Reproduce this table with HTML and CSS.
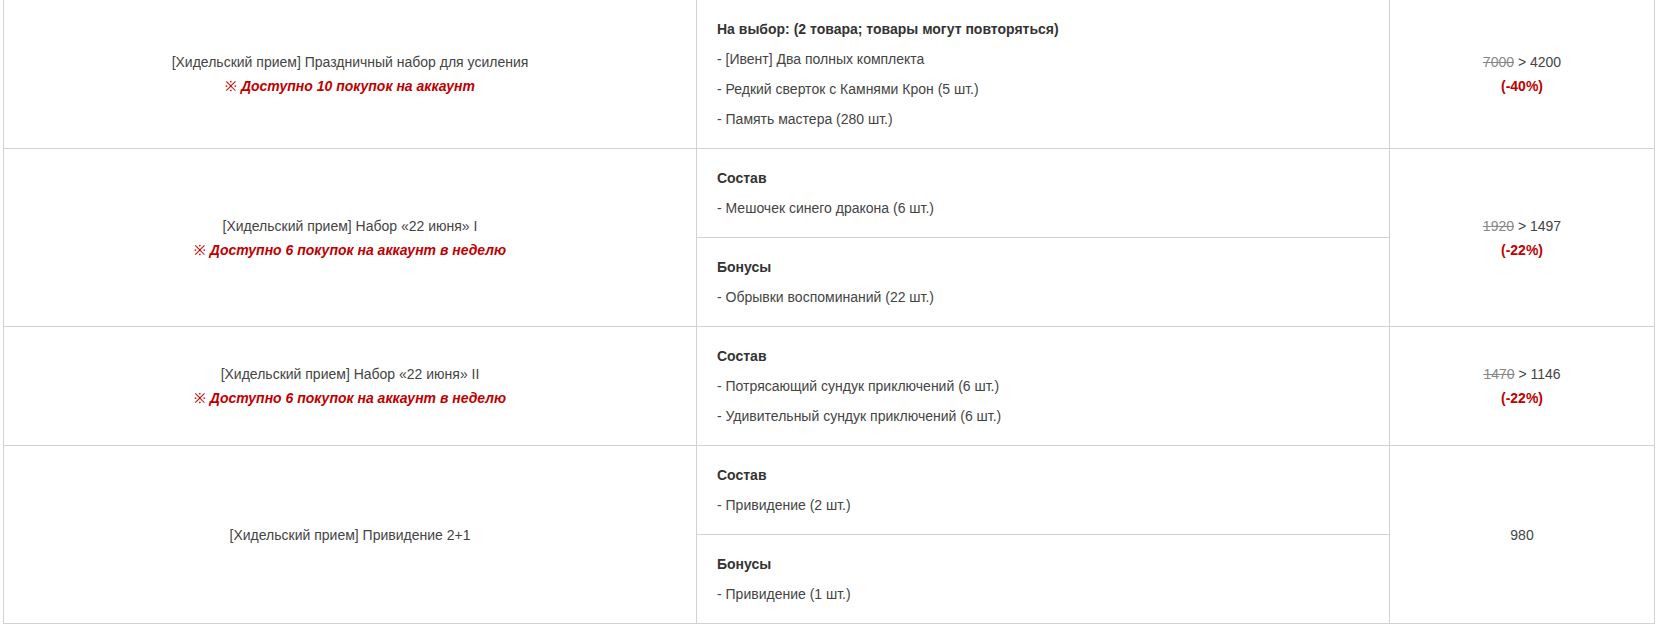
FILE: index.html
```html
<!DOCTYPE html>
<html lang="ru">
<head>
<meta charset="utf-8">
<title>Товары</title>
<link rel="stylesheet" href="styles.css">
</head>
<body>
<table class="shop">
  <colgroup>
    <col class="c-name">
    <col class="c-items">
    <col class="c-price">
  </colgroup>
  <tbody>
    <tr>
      <td class="name">
        <div class="title">[Хидельский прием] Праздничный набор для усиления</div>
        <div class="limit">※ <strong><em>Доступно 10 покупок на аккаунт</em></strong></div>
      </td>
      <td class="items">
        <p class="head">На выбор: (2 товара; товары могут повторяться)</p>
        <p>- [Ивент] Два полных комплекта</p>
        <p>- Редкий сверток с Камнями Крон (5 шт.)</p>
        <p>- Память мастера (280 шт.)</p>
      </td>
      <td class="price">
        <div><s class="old">7000</s> &gt; 4200</div>
        <div class="disc">(-40%)</div>
      </td>
    </tr>
    <tr>
      <td class="name" rowspan="2">
        <div class="title">[Хидельский прием] Набор «22 июня» I</div>
        <div class="limit">※ <strong><em>Доступно 6 покупок на аккаунт в неделю</em></strong></div>
      </td>
      <td class="items">
        <p class="head">Состав</p>
        <p>- Мешочек синего дракона (6 шт.)</p>
      </td>
      <td class="price" rowspan="2">
        <div><s class="old">1920</s> &gt; 1497</div>
        <div class="disc">(-22%)</div>
      </td>
    </tr>
    <tr>
      <td class="items">
        <p class="head">Бонусы</p>
        <p>- Обрывки воспоминаний (22 шт.)</p>
      </td>
    </tr>
    <tr>
      <td class="name">
        <div class="title">[Хидельский прием] Набор «22 июня» II</div>
        <div class="limit">※ <strong><em>Доступно 6 покупок на аккаунт в неделю</em></strong></div>
      </td>
      <td class="items">
        <p class="head">Состав</p>
        <p>- Потрясающий сундук приключений (6 шт.)</p>
        <p>- Удивительный сундук приключений (6 шт.)</p>
      </td>
      <td class="price">
        <div><s class="old">1470</s> &gt; 1146</div>
        <div class="disc">(-22%)</div>
      </td>
    </tr>
    <tr>
      <td class="name" rowspan="2">
        <div class="title">[Хидельский прием] Привидение 2+1</div>
      </td>
      <td class="items">
        <p class="head">Состав</p>
        <p>- Привидение (2 шт.)</p>
      </td>
      <td class="price" rowspan="2">
        <div>980</div>
      </td>
    </tr>
    <tr>
      <td class="items">
        <p class="head">Бонусы</p>
        <p>- Привидение (1 шт.)</p>
      </td>
    </tr>
  </tbody>
</table>
</body>
</html>
```

FILE: styles.css
```css
html, body {
  margin: 0;
  padding: 0;
  background: #fff;
}

body {
  font-family: "Liberation Sans", Arial, sans-serif;
  font-size: 14px;
  color: #444;
}

.shop {
  border-collapse: collapse;
  table-layout: fixed;
  width: 1651px;
  margin: -1px 0 0 3px;
}

.c-name { width: 693px; }
.c-items { width: 693px; }
.c-price { width: 265px; }

.shop td {
  border: 1px solid #d2d2d2;
  vertical-align: middle;
}

.name {
  text-align: center;
  padding: 0 10px;
  line-height: 24px;
}

.limit {
  color: #bf0000;
}

.limit strong {
  font-weight: bold;
}

.items {
  padding: 9px 20px;
  text-align: left;
}

.items p {
  margin: 10px 0;
  line-height: 20px;
}

.items .head {
  font-weight: bold;
  color: #333;
}

.price {
  text-align: center;
  line-height: 24px;
}

.old {
  color: #888;
}

.disc {
  color: #bf0000;
  font-weight: bold;
}
```
